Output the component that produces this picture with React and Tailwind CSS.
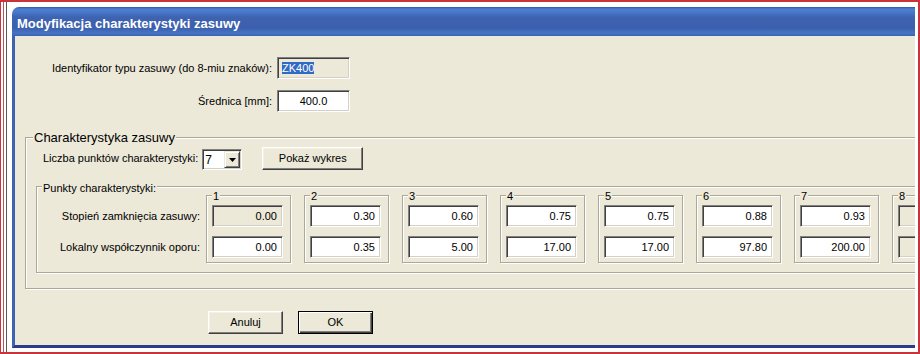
import React from "react";

function Field({ value = "", disabled = false, w = "w-[71px]", center = false, selected = false }) {
  return (
    <div
      className={`${w} h-[22px] shrink-0 border border-t-[#808080] border-l-[#808080] border-b-white border-r-white shadow-[inset_1px_1px_0_#404040,inset_-1px_-1px_0_#d4d0c8] flex items-center text-[11px] text-black ${
        disabled ? "bg-[#ece9d8]" : "bg-white"
      } ${center ? "justify-center" : selected ? "justify-start pl-[4px]" : "justify-end pr-[5px]"}`}
    >
      {selected ? (
        <span className="bg-[#316ac5] text-white leading-[12px]">{value}</span>
      ) : (
        <span>{value}</span>
      )}
    </div>
  );
}

function Btn({ label, w = "w-[75px]", isDefault = false }) {
  if (isDefault) {
    return (
      <div className={`${w} h-[23px] shrink-0 border border-black bg-[#ece9d8] shadow-[inset_1px_1px_0_#fff,inset_-1px_-1px_0_#404040,inset_-2px_-2px_0_#808080] flex items-center justify-center text-[11px] text-black`}>
        {label}
      </div>
    );
  }
  return (
    <div className={`${w} h-[23px] shrink-0 border border-t-white border-l-white border-b-[#404040] border-r-[#404040] bg-[#ece9d8] shadow-[inset_-1px_-1px_0_#808080,inset_1px_1px_0_#f4f2e8] flex items-center justify-center text-[11px] text-black`}>
      {label}
    </div>
  );
}

const points = [
  ["0.00", "0.00", true],
  ["0.30", "0.35"],
  ["0.60", "5.00"],
  ["0.75", "17.00"],
  ["0.75", "17.00"],
  ["0.88", "97.80"],
  ["0.93", "200.00"],
  ["", "", false, true],
];

function PointGroup({ n, a, b, firstDisabled, empty }) {
  return (
    <div className="relative shrink-0 w-[85px] h-[68px] border border-[#aca899] shadow-[inset_1px_1px_0_#fff,1px_1px_0_#fff] pt-[9px] pl-[5px] flex flex-col gap-[9px]">
      <span className="absolute -top-[6px] left-[5px] px-[1px] bg-[#ece9d8] text-[11px] leading-[13px] text-black">
        {n}
      </span>
      <Field value={a} disabled={firstDisabled || empty} />
      <Field value={b} disabled={empty} />
    </div>
  );
}

export default function App() {
  return (
    <div className="w-[920px] h-[354px] bg-white border-t-2 border-r-2 border-b-2 border-l border-[#c8343c] flex overflow-hidden font-['Liberation_Sans',Arial,sans-serif]">
      <div className="w-[11px] shrink-0 flex pl-[2px] gap-[2px]">
        <div className="w-[1px] h-full bg-[#c05058]" />
        <div className="w-[1px] h-full bg-[#5e5656]" />
      </div>
      <div className="mt-[5px] w-[903px] h-[341px] shrink-0 flex flex-col rounded-tl-[7px] overflow-hidden">
        <div className="h-[29px] shrink-0 bg-[linear-gradient(to_bottom,#2f55a3_0px,#4d7fcf_2px,#4879ca_5px,#3e63b1_10px,#3c5fad_21px,#4574c4_26px,#3c62b0_29px)] pl-[5px] pt-[9px]">
          <div className="text-[13px] leading-[15px] font-bold text-white">Modyfikacja charakterystyki zasuwy</div>
        </div>
        <div className="flex-1 min-h-0 border-l-[3px] border-b-[3px] border-l-[#3d63b0] border-b-[#2a3d8d] bg-[#ece9d8] overflow-hidden pt-[21px] flex flex-col text-black">
          <div className="flex flex-col gap-[11px]">
            <div className="flex items-center">
              <div className="w-[257px] shrink-0 text-right text-[11px]">Identyfikator typu zasuwy (do 8-miu znaków):</div>
              <div className="ml-[5px]">
                <Field value="ZK400" disabled selected w="w-[73px]" />
              </div>
            </div>
            <div className="flex items-center">
              <div className="w-[257px] shrink-0 text-right text-[11px]">Średnica [mm]:</div>
              <div className="ml-[5px]">
                <Field value="400.0" center w="w-[73px]" />
              </div>
            </div>
          </div>

          <div className="relative mt-[25px] ml-[10px] w-[1000px] shrink-0 border border-[#aca899] shadow-[inset_1px_1px_0_#fff,1px_1px_0_#fff] pt-[9px] pb-[15px]">
            <span className="absolute -top-[8px] left-[7px] px-[1px] bg-[#ece9d8] text-[13px] leading-[15px]">
              Charakterystyka zasuwy
            </span>
            <div className="flex items-start pl-[17px] h-[23px]">
              <span className="text-[11px] leading-[13px] mt-[5px]">Liczba punktów charakterystyki:</span>
              <div className="ml-[4px] mt-[2px] w-[40px] h-[21px] border border-t-[#808080] border-l-[#808080] border-b-white border-r-white shadow-[inset_1px_1px_0_#404040,inset_-1px_-1px_0_#d4d0c8] bg-white p-[1px] flex">
                <div className="flex-1 flex items-center pl-[1px] text-[12px]">7</div>
                <div className="w-[16px] h-full border border-t-[#ece9d8] border-l-[#ece9d8] border-b-[#404040] border-r-[#404040] shadow-[inset_1px_1px_0_#fff,inset_-1px_-1px_0_#808080] bg-[#ece9d8] flex items-center justify-center">
                  <svg width="7" height="4" viewBox="0 0 7 4">
                    <path d="M0 0h7L3.5 4z" fill="#000" />
                  </svg>
                </div>
              </div>
              <div className="ml-[20px]">
                <Btn label="Pokaż wykres" w="w-[101px]" />
              </div>
            </div>

            <div className="relative mt-[16px] ml-[10px] w-[980px] border border-[#aca899] shadow-[inset_1px_1px_0_#fff,1px_1px_0_#fff] pt-[8px] pb-[9px] flex">
              <span className="absolute -top-[5px] left-[5px] px-[1px] bg-[#ece9d8] text-[11px] leading-[13px]">
                Punkty charakterystyki:
              </span>
              <div className="w-[163px] shrink-0 pt-[10px] flex flex-col gap-[9px] text-[11px]">
                <div className="h-[22px] flex items-center justify-end">Stopień zamknięcia zasuwy:</div>
                <div className="h-[22px] flex items-center justify-end">Lokalny współczynnik oporu:</div>
              </div>
              <div className="ml-[6px] flex gap-[13px]">
                {points.map((p, i) => (
                  <PointGroup key={i} n={i + 1} a={p[0]} b={p[1]} firstDisabled={p[2]} empty={p[3]} />
                ))}
              </div>
            </div>
          </div>

          <div className="mt-[22px] ml-[193px] flex gap-[15px]">
            <Btn label="Anuluj" />
            <Btn label="OK" isDefault />
          </div>
        </div>
      </div>
      <div className="w-[3px] shrink-0" />
    </div>
  );
}
